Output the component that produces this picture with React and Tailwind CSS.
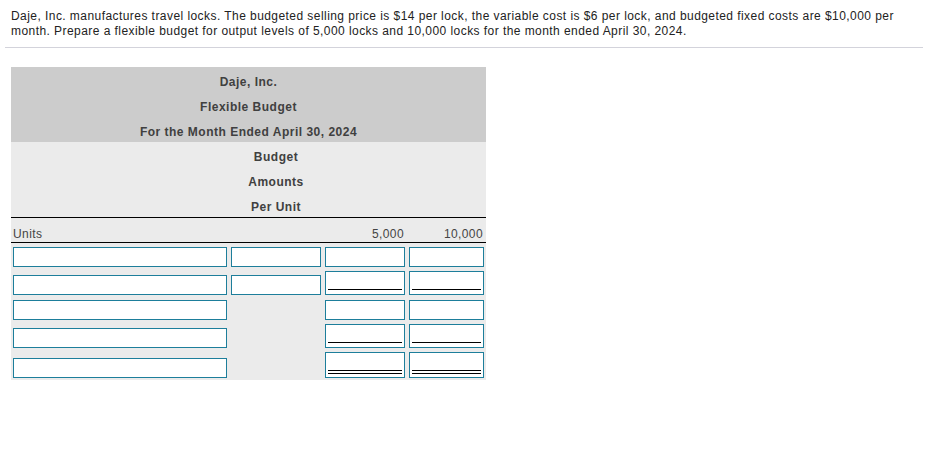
const font = { fontFamily: '"Liberation Sans", Arial, sans-serif' };

function Field({ tall = false, line = 'none' }) {
  return (
    <div className={`${tall ? 'h-[24px]' : 'h-[20px]'} w-full border border-[#1d7e9b] bg-white px-[2px]`}>
      {line === 'single' && <div className="mt-[17px] border-b border-black" />}
    </div>
  );
}

function DoubleField() {
  return (
    <div className="h-[26px] w-full border border-[#1d7e9b] bg-white px-[2px]">
      <div className="mt-[17px] h-[4px] border-y border-black" />
    </div>
  );
}

function Row({ cells, className }) {
  return (
    <div className={`grid grid-cols-[218px_94px_84px_79px] items-end ${className}`}>
      {cells.map((c, i) => (
        <div key={i} className="px-[2px]">
          {c}
        </div>
      ))}
    </div>
  );
}

export default function App() {
  return (
    <div className="min-h-screen bg-white text-[12px]" style={font}>
      <div className="px-[11px] pt-[9px] pb-[8px] leading-[15px] tracking-[0.44px] text-[#222]">
        Daje, Inc. manufactures travel locks. The budgeted selling price is $14 per lock, the variable cost is $6 per lock, and budgeted fixed costs are $10,000 per month. Prepare a flexible budget for output levels of 5,000 locks and 10,000 locks for the month ended April 30, 2024.
      </div>
      <div className="mx-[5px] border-t border-[#d3d3db]" />

      <div className="ml-[11px] mt-[19px] w-[475px] bg-[#ebebeb]">
        <div className="bg-[#cccccc] text-center font-bold tracking-[0.5px] text-[#404040]">
          <div className="h-[25px] leading-[31px]">Daje, Inc.</div>
          <div className="h-[25px] leading-[31px]">Flexible Budget</div>
          <div className="h-[25px] leading-[31px]">For the Month Ended April 30, 2024</div>
        </div>
        <div className="grid grid-cols-[218px_94px_84px_79px] border-b border-black font-bold tracking-[0.5px] text-[#404040]">
          <div />
          <div className="text-center">
            <div className="h-[25px] leading-[31px]">Budget</div>
            <div className="h-[25px] leading-[31px]">Amounts</div>
            <div className="h-[25px] leading-[31px]">Per Unit</div>
          </div>
          <div />
          <div />
        </div>
        <div className="grid h-[25px] grid-cols-[218px_94px_84px_79px] border-b border-black leading-[32px] tracking-[0.4px] text-[#444]">
          <div className="pl-[2px]">Units</div>
          <div />
          <div className="pr-[3px] text-right">5,000</div>
          <div className="pr-[3px] text-right">10,000</div>
        </div>

        <Row className="h-[26px] pb-[2px]" cells={[<Field />, <Field />, <Field />, <Field />]} />
        <Row
          className="h-[28px] pb-[2px]"
          cells={[<Field />, <Field />, <Field tall line="single" />, <Field tall line="single" />]}
        />
        <Row className="h-[25px] pb-[2px]" cells={[<Field />, null, <Field />, <Field />]} />
        <Row
          className="h-[28px] pb-[2px]"
          cells={[<Field />, null, <Field tall line="single" />, <Field tall line="single" />]}
        />
        <Row className="h-[30px] pb-[2px]" cells={[<Field />, null, <DoubleField />, <DoubleField />]} />
      </div>
    </div>
  );
}
